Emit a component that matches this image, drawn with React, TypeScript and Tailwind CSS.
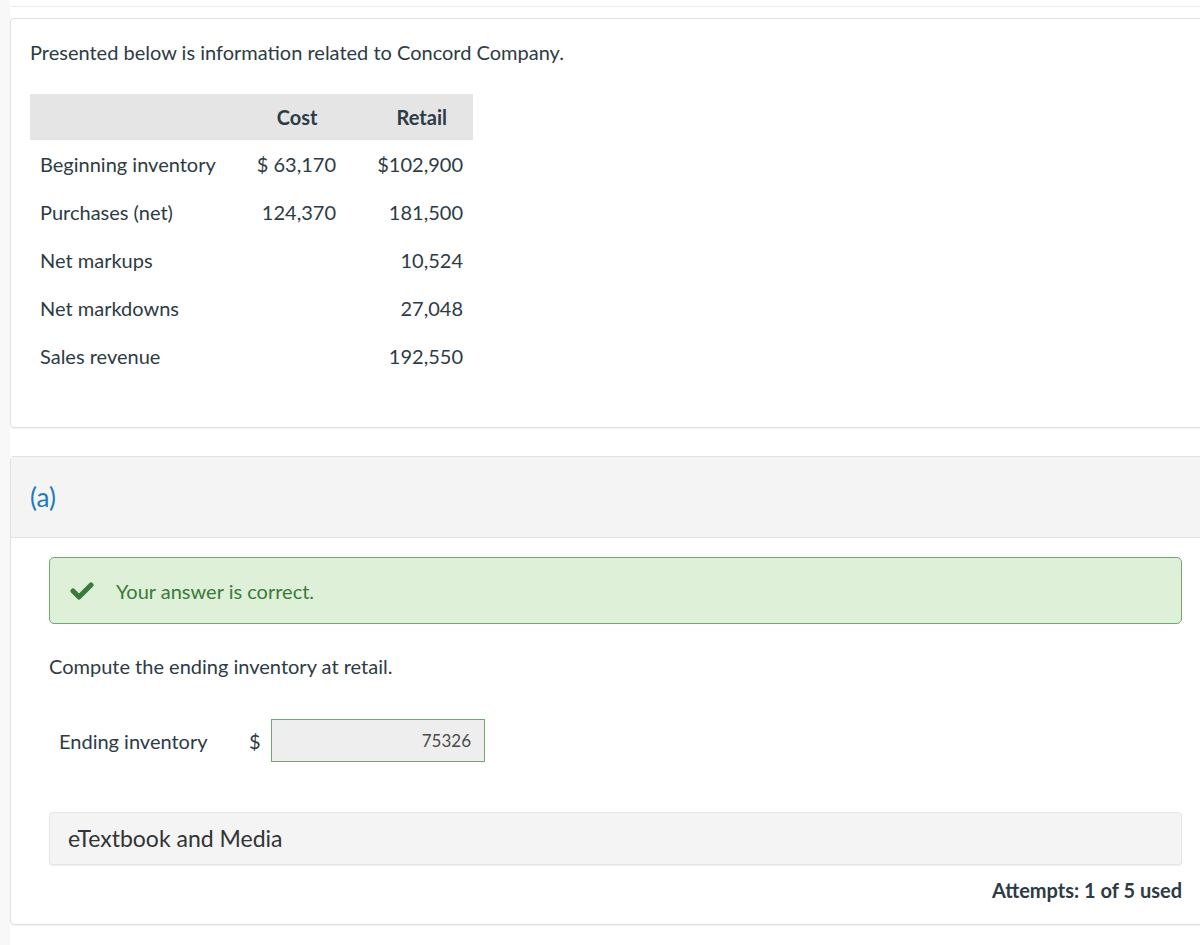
const rows: { label: string; cost: string; retail: string }[] = [
  { label: "Beginning inventory", cost: "$ 63,170", retail: "$102,900" },
  { label: "Purchases (net)", cost: "124,370", retail: "181,500" },
  { label: "Net markups", cost: "", retail: "10,524" },
  { label: "Net markdowns", cost: "", retail: "27,048" },
  { label: "Sales revenue", cost: "", retail: "192,550" },
];

function Check() {
  return (
    <svg width="24" height="20" viewBox="0 0 24 20" className="shrink-0">
      <polyline
        points="3,10 9,16 21,4"
        fill="none"
        stroke="#3a7a3c"
        strokeWidth="5"
        strokeLinecap="round"
        strokeLinejoin="round"
      />
    </svg>
  );
}

export default function App() {
  return (
    <div
      className="flex h-[945px] w-[1200px] overflow-hidden bg-white text-[#2d3b45]"
      style={{ fontFamily: "Lato, 'Open Sans', sans-serif" }}
    >
      <div className="w-[10px] shrink-0 bg-[#f8f8f8]" />
      <div className="flex flex-1 flex-col">
        <div className="h-[7px] border-b border-[#ececec]" />

        {/* info card */}
        <div className="mt-[11px] -mr-4 h-[410px] rounded-l-[4px] border border-[#e1e1e1] shadow-[0_1px_1px_rgba(0,0,0,0.06)] pl-[19px] pt-[19px]">
          <p className="text-[20px] leading-[28px]">Presented below is information related to Concord Company.</p>

          <div className="mt-[28px] w-[443px]">
            <div className="flex h-[46px] items-center bg-[#e5e5e5] text-[20px] font-bold">
              <div className="w-[218px]" />
              <div className="w-[98px] text-center">Cost</div>
              <div className="w-[127px] text-right pr-[26px]">Retail</div>
            </div>
            {rows.map((r) => (
              <div key={r.label} className="flex h-[48px] items-center text-[20px]">
                <div className="w-[218px] pl-[10px]">{r.label}</div>
                <div className="w-[98px] pr-[10px] text-right">{r.cost}</div>
                <div className="w-[127px] pr-[10px] text-right">{r.retail}</div>
              </div>
            ))}
          </div>
        </div>

        {/* part (a) */}
        <div className="mt-[28px] -mr-4 h-[469px] rounded-l-[4px] border border-[#e1e1e1] shadow-[0_1px_1px_rgba(0,0,0,0.06)]">
          <div className="flex h-[81px] items-center border-b border-[#e3e3e3] bg-[#f4f4f4] pl-[19px]">
            <span className="text-[26px] text-[#1b7bbf]">(a)</span>
          </div>

          <div className="pl-[38px] pr-[33px] pt-[19px]">
            <div className="flex h-[67px] items-center gap-[22px] rounded-[5px] border border-[#74a873] bg-[#dff0d8] pl-[20px]">
              <Check />
              <span className="text-[20px] text-[#3a7a3c]">Your answer is correct.</span>
            </div>

            <p className="mt-[28px] text-[20px] leading-[28px]">Compute the ending inventory at retail.</p>

            <div className="mt-[39px] flex items-center pl-[10px]">
              <span className="w-[190px] text-[20px]">Ending inventory</span>
              <span className="w-[22px] text-[20px]">$</span>
              <div className="flex h-[43px] w-[214px] items-center justify-end border border-[#74a873] bg-[#eeeeee] pr-[13px] text-[17px] text-[#4a4a4a]">
                75326
              </div>
            </div>

            <div className="mt-[50px] flex h-[53px] items-center rounded-[4px] border border-[#e6e6e6] bg-[#f4f4f4] pl-[18px] shadow-[0_1px_1px_rgba(0,0,0,0.08)]">
              <span className="text-[23px] text-[#333]">eTextbook and Media</span>
            </div>

            <div className="mt-[10px] text-right text-[20px] font-bold">Attempts: 1 of 5 used</div>
          </div>
        </div>
      </div>
    </div>
  );
}
